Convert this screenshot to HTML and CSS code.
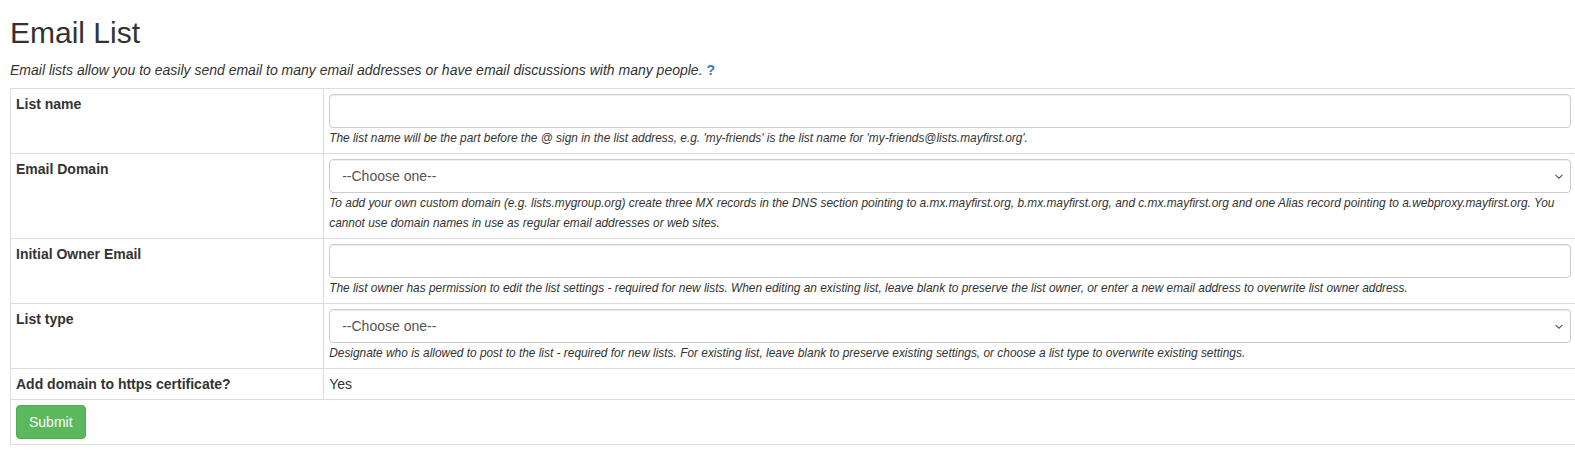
FILE: index.html
```html
<!DOCTYPE html>
<html>
<head>
  <title>Email List</title>
  <meta charset="utf-8">
  <link rel="stylesheet" href="styles.css">
</head>
<body>
  <div class="container">
    <h2>Email List</h2>
    <p class="intro">Email lists allow you to easily send email to many email addresses or have email discussions with many people. <a href="#" class="help-link">?</a></p>

    <form>
      <table class="form-table">
        <tr>
          <th>List name</th>
          <td>
            <input type="text" class="form-control">
            <div class="help">The list name will be the part before the @ sign in the list address, e.g. 'my-friends' is the list name for 'my-friends@lists.mayfirst.org'.</div>
          </td>
        </tr>
        <tr>
          <th>Email Domain</th>
          <td>
            <div class="select-wrap">
              <select class="form-control">
                <option>--Choose one--</option>
              </select>
              <svg class="caret" viewBox="0 0 8 5" fill="none" stroke="#555" stroke-width="1.1"><path d="M0.5 0.8 L4 4.2 L7.5 0.8"/></svg>
            </div>
            <div class="help">To add your own custom domain (e.g. lists.mygroup.org) create three MX records in the DNS section pointing to a.mx.mayfirst.org, b.mx.mayfirst.org, and c.mx.mayfirst.org and one Alias record pointing to a.webproxy.mayfirst.org. You cannot use domain names in use as regular email addresses or web sites.</div>
          </td>
        </tr>
        <tr>
          <th>Initial Owner Email</th>
          <td>
            <input type="text" class="form-control">
            <div class="help">The list owner has permission to edit the list settings - required for new lists. When editing an existing list, leave blank to preserve the list owner, or enter a new email address to overwrite list owner address.</div>
          </td>
        </tr>
        <tr>
          <th>List type</th>
          <td>
            <div class="select-wrap">
              <select class="form-control">
                <option>--Choose one--</option>
              </select>
              <svg class="caret" viewBox="0 0 8 5" fill="none" stroke="#555" stroke-width="1.1"><path d="M0.5 0.8 L4 4.2 L7.5 0.8"/></svg>
            </div>
            <div class="help">Designate who is allowed to post to the list - required for new lists. For existing list, leave blank to preserve existing settings, or choose a list type to overwrite existing settings.</div>
          </td>
        </tr>
        <tr>
          <th>Add domain to https certificate?</th>
          <td>Yes</td>
        </tr>
        <tr>
          <td colspan="2"><button type="submit" class="btn-success">Submit</button></td>
        </tr>
      </table>
    </form>
  </div>
</body>
</html>
```

FILE: styles.css
```css
body {
  font-family: "Liberation Sans", Arial, sans-serif;
  font-size: 14px;
  line-height: 20px;
  color: #333;
  background: #fff;
  margin: 0;
  overflow: hidden;
}

.container {
  padding-left: 10px;
  margin-right: -2px;
}

h2 {
  font-size: 30px;
  font-weight: 500;
  line-height: 33px;
  margin: 16px 0 11px;
}

.intro {
  font-style: italic;
  margin: 0 0 8px;
}

.help-link {
  color: #337ab7;
  font-weight: bold;
  font-style: normal;
  text-decoration: none;
}

.form-table {
  width: 100%;
  border-collapse: collapse;
  border: 1px solid #ddd;
}

.form-table th,
.form-table td {
  border: 1px solid #ddd;
  padding: 5px;
  text-align: left;
  vertical-align: top;
}

.form-table th {
  width: 20%;
  font-weight: bold;
}

.form-control {
  display: block;
  box-sizing: border-box;
  width: 100%;
  height: 34px;
  padding: 6px 12px;
  font-family: inherit;
  font-size: 14px;
  line-height: 20px;
  color: #555;
  background-color: #fff;
  border: 1px solid #ccc;
  border-radius: 4px;
  box-shadow: inset 0 1px 1px rgba(0, 0, 0, .075);
}

select.form-control {
  appearance: none;
  -webkit-appearance: none;
}

.select-wrap {
  position: relative;
}

.caret {
  position: absolute;
  right: 8px;
  top: 15px;
  width: 8px;
  height: 5px;
}

.help {
  font-size: 11.9px;
  line-height: 20px;
  font-style: italic;
}

.btn-success {
  display: inline-block;
  padding: 6px 12px;
  font-family: inherit;
  font-size: 14px;
  line-height: 20px;
  color: #fff;
  background-color: #5cb85c;
  border: 1px solid #4cae4c;
  border-radius: 4px;
  cursor: pointer;
}
```
